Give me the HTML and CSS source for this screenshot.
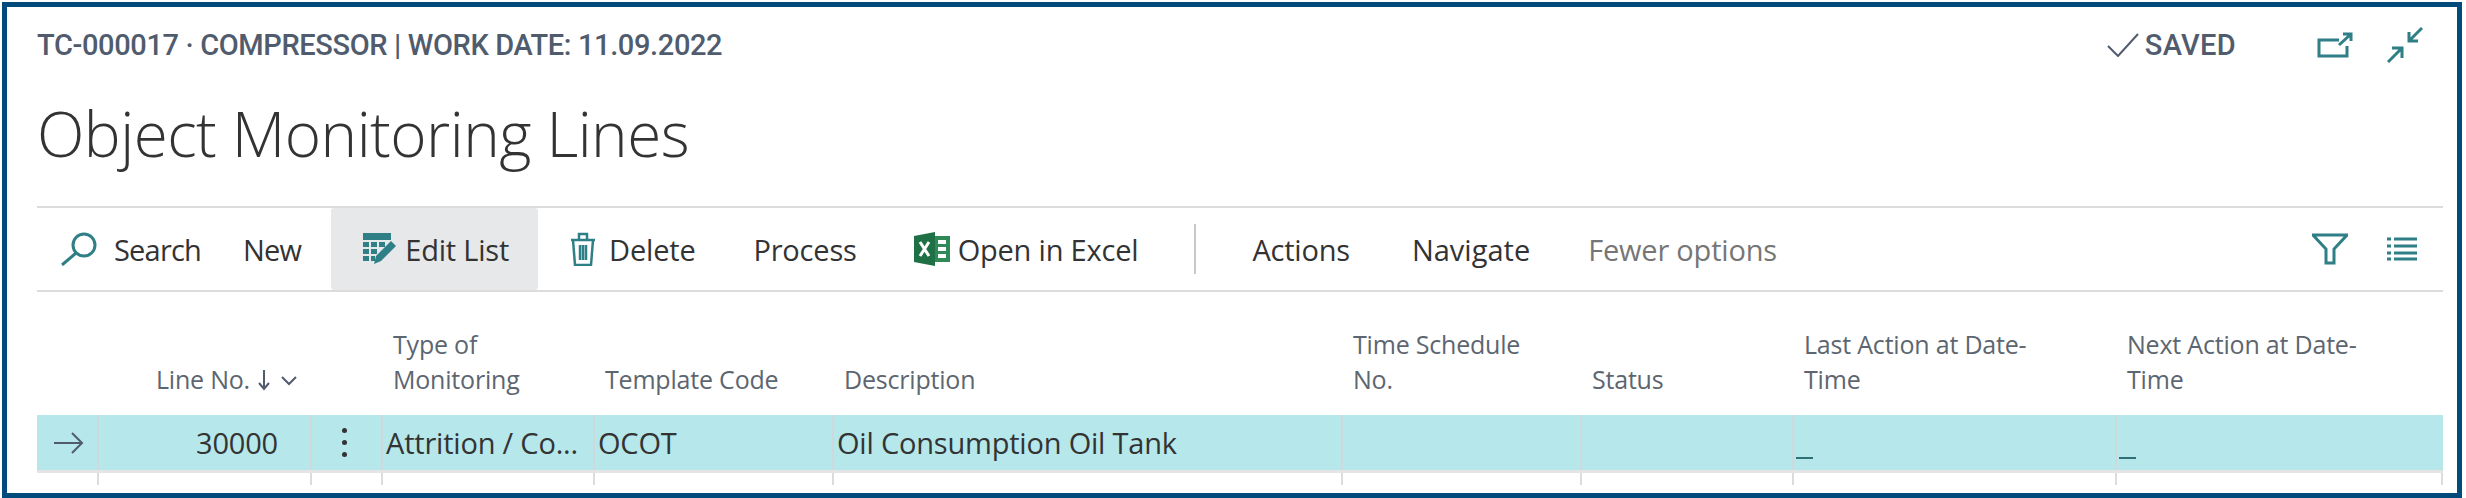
FILE: index.html

```html
<!DOCTYPE html>
<html lang="en">
<head>
  <meta charset="UTF-8" />
  <title>Object Monitoring Lines</title>
  <link rel="stylesheet" href="styles.css">
</head>
<body>
  <div class="frame">
    <div class="topbar">
      <div class="crumb">TC-000017 · COMPRESSOR | WORK DATE: 11.09.2022</div>
      <div class="saved">
        <svg class="check" width="32" height="24" viewBox="0 0 32 24"><path d="M1 13 L11 23 L31 1" /></svg>
        <span>SAVED</span>
      </div>
      <svg class="ico open-ico" width="36" height="26" viewBox="0 0 36 26"><path d="M22 8 H2 V24 H30 V14" /><path d="M22 13 L33 3 M26 2 H34 V9" /></svg>
      <svg class="ico collapse-ico" width="36" height="36" viewBox="0 0 36 36"><path d="M35 1 L22 14 M22 5 V14 H31" /><path d="M1 35 L14 22 M5 21 H15 V31" /></svg>
    </div>
    <h1>Object Monitoring Lines</h1>

    <div class="toolbar">
      <div class="cmd search">
        <svg class="ico" width="36" height="34" viewBox="0 0 36 34"><circle cx="23" cy="13" r="11" /><path d="M15 21 L1 33" /></svg>
        <span>Search</span>
      </div>
      <div class="cmd new"><span>New</span></div>
      <div class="cmd active">
        <svg width="34" height="32" viewBox="0 0 34 32">
          <path class="fill" d="M0 0 H28 V7 H0 Z" />
          <path class="fill" d="M0 9 H6 V14 H0 Z M8 9 H14 V14 H8 Z M16 9 H22 V14 H16 Z M0 16 H6 V21 H0 Z M8 16 H14 V21 H8 Z M0 23 H6 V28 H0 Z M8 23 H12 V28 H8 Z" />
          <path class="fill" d="M28 8 L33 13 L18 28 L11 31 L13 23 Z" />
        </svg>
        <span>Edit List</span>
      </div>
      <div class="cmd del">
        <svg class="ico thin" width="26" height="34" viewBox="0 0 26 34"><path d="M1 8 H25 M9 8 V2 H17 V8 M3 8 L5 33 H21 L23 8 M10 13 V28 M13 13 V28 M16 13 V28" /></svg>
        <span>Delete</span>
      </div>
      <div class="cmd"><span>Process</span></div>
      <div class="cmd excel">
        <svg width="36" height="34" viewBox="0 0 36 34">
          <path fill="#1f7145" d="M0 4 L21 0 V34 L0 30 Z" />
          <path fill="#2f8a57" d="M21 4 H36 V30 H21 Z" />
          <path fill="#fff" d="M24 8 H32 V12 H24 Z M24 15 H32 V19 H24 Z M24 22 H32 V26 H24 Z" />
          <path fill="none" stroke="#fff" stroke-width="3" d="M6 10 L15 24 M15 10 L6 24" />
        </svg>
        <span>Open in Excel</span>
      </div>
      <div class="sep"></div>
      <div class="cmd actions"><span>Actions</span></div>
      <div class="cmd navigate"><span>Navigate</span></div>
      <div class="cmd fewer"><span>Fewer options</span></div>
      <div class="tools">
        <svg class="ico" width="36" height="32" viewBox="0 0 36 32"><path d="M1 2 H35 L22 16 V30 H14 V16 Z" /></svg>
        <svg class="ico" width="30" height="24" viewBox="0 0 30 24"><path d="M0 2 H4 M7 2 H30 M0 9 H4 M7 9 H30 M0 16 H4 M7 16 H30 M0 22 H4 M7 22 H30" /></svg>
      </div>
    </div>

    <div class="grid head">
      <div></div>
      <div class="th right">Line No.
        <svg class="sort" width="40" height="22" viewBox="0 0 40 22"><path d="M7 1 V20 M2 14 L7 20 L12 14" /><path d="M25 8 L32 15 L39 8" /></svg>
      </div>
      <div></div>
      <div class="th">Type of<br>Monitoring</div>
      <div class="th">Template Code</div>
      <div class="th">Description</div>
      <div class="th">Time Schedule<br>No.</div>
      <div class="th">Status</div>
      <div class="th">Last Action at Date-<br>Time</div>
      <div class="th">Next Action at Date-<br>Time</div>
    </div>

    <div class="grid row">
      <div class="td arrow">
        <svg width="30" height="24" viewBox="0 0 30 24"><path d="M0 12 H28 M18 2 L28 12 L18 22" /></svg>
      </div>
      <div class="td num">30000</div>
      <div class="td dots"><i></i><i></i><i></i></div>
      <div class="td">Attrition / Co...</div>
      <div class="td">OCOT</div>
      <div class="td">Oil Consumption Oil Tank</div>
      <div class="td"></div>
      <div class="td"></div>
      <div class="td blank"><b></b></div>
      <div class="td blank"><b></b></div>
    </div>

    <div class="grid stubs">
      <div></div><div></div><div></div><div></div><div></div>
      <div></div><div></div><div></div><div></div><div class="last"></div>
    </div>
  </div>
</body>
</html>
```

FILE: styles.css

```css
html, body {
  margin: 0;
  background: #fff;
}
body {
  font-family: "Open Sans", sans-serif;
  color: #333;
}
svg {
  display: block;
  flex: none;
}
.frame {
  box-sizing: border-box;
  width: 2460px;
  height: 496px;
  margin: 2px 0 0 2px;
  border: 5px solid #004a7c;
  padding: 0 14px 0 30px;
  overflow: hidden;
}
.ico path, .ico circle {
  fill: none;
  stroke: #2f7f86;
  stroke-width: 3;
}
.ico.thin path {
  stroke-width: 2.5;
}

/* top line */
.topbar {
  display: flex;
  align-items: center;
  height: 76px;
  font-family: Roboto, sans-serif;
  font-weight: 500;
  font-size: 29px;
  letter-spacing: -0.37px;
  color: #505c6d;
}
.crumb {
  flex: 1;
}
.saved {
  display: flex;
  align-items: center;
  gap: 6px;
  margin-right: 81px;
  letter-spacing: 0.3px;
}
.check path {
  fill: none;
  stroke: #505c6d;
  stroke-width: 2;
}
.open-ico {
  margin-right: 34px;
}
.collapse-ico {
  margin-right: 20px;
}

h1 {
  margin: 0;
  height: 123px;
  font-weight: 300;
  font-size: 62px;
  line-height: 100px;
  letter-spacing: -0.55px;
  color: #333;
}

/* action bar */
.toolbar {
  display: flex;
  align-items: center;
  height: 82px;
  border-top: 2px solid #dcdcdc;
  border-bottom: 2px solid #dcdcdc;
  font-size: 29px;
  letter-spacing: -0.2px;
}
.cmd {
  display: flex;
  align-items: center;
  height: 100%;
  padding: 0 29px;
  gap: 10px;
  white-space: nowrap;
}
.cmd.search {
  padding: 0 21px 0 24px;
  gap: 17px;
  letter-spacing: -0.8px;
}
.cmd.new {
  padding: 0 30px 0 21px;
  letter-spacing: -0.8px;
}
.cmd.active {
  background: #e6e8ea;
  border-radius: 3px;
  padding: 0 29px 0 32px;
  gap: 8px;
}
.cmd.del {
  padding-left: 32px;
  gap: 13px;
}
.cmd.excel {
  padding-left: 28px;
  gap: 8px;
}
.cmd.actions {
  padding-right: 33px;
}
.cmd.navigate {
  letter-spacing: 0;
}
.cmd.fewer {
  color: #767676;
}
.sep {
  width: 2px;
  height: 50px;
  background: #c8c8c8;
  margin: 0 27px;
}
.tools {
  margin-left: auto;
  margin-right: 26px;
  display: flex;
  align-items: center;
  gap: 39px;
}
.active .fill {
  fill: #2f7f86;
}

/* lines */
.grid {
  display: grid;
  grid-template-columns: 60px 213px 71px 212px 239px 509px 239px 212px 323px 328px;
}
.head {
  height: 123px;
  align-items: end;
  font-size: 25px;
  line-height: 35px;
  letter-spacing: -0.2px;
  color: #5d6670;
}
.th {
  padding: 0 0 18px 12px;
}
.th.right {
  display: flex;
  align-items: center;
  justify-content: flex-end;
  grid-column: 2;
  gap: 7px;
  margin-right: 13px;
}
.sort path {
  fill: none;
  stroke: #505c6d;
  stroke-width: 2;
}
.row {
  height: 55px;
  background: #b5e7eb;
  font-size: 29px;
  line-height: 55px;
  letter-spacing: -0.2px;
  color: #333;
}
.td {
  box-sizing: border-box;
  height: 100%;
  padding-left: 3px;
  border-left: 2px solid #cfd9dc;
  white-space: nowrap;
}
.td.arrow {
  border-left: 0;
  display: flex;
  align-items: center;
  padding-left: 17px;
}
.arrow path {
  fill: none;
  stroke: #505c6d;
  stroke-width: 2;
}
.td.num {
  text-align: right;
  padding-right: 32px;
}
.td.dots {
  display: flex;
  flex-direction: column;
  align-items: center;
  justify-content: center;
  gap: 7px;
  padding: 0 4px 0 0;
}
.dots i {
  width: 5px;
  height: 5px;
  border-radius: 50%;
  background: #333;
}
.td.blank {
  position: relative;
}
.blank b {
  position: absolute;
  left: 2px;
  top: 42px;
  width: 17px;
  height: 2px;
  background: #2f6f76;
}
.stubs {
  height: 12px;
  border-top: 3px solid #e4e4e4;
}
.stubs div + div {
  border-left: 2px solid #dcdcdc;
}
.stubs .last {
  border-right: 2px solid #dcdcdc;
}
```
